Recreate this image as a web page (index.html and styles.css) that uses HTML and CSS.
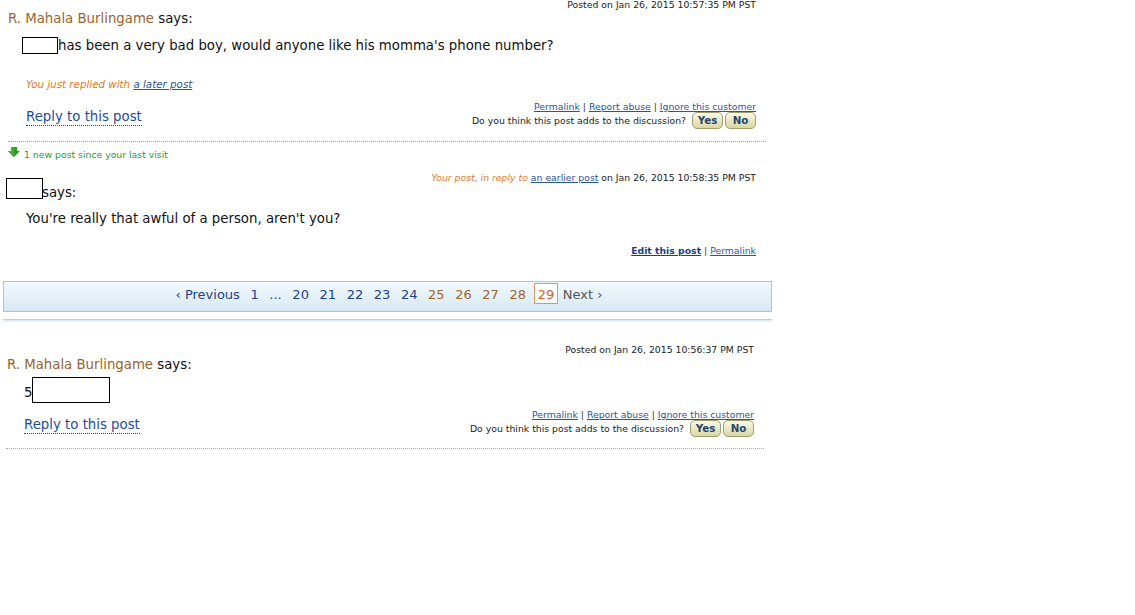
FILE: index.html
```html
<!DOCTYPE html>
<html>
<head>
<meta charset="utf-8">
<title>Discussion</title>
<link rel="stylesheet" href="styles.css">
</head>
<body>
<div class="thread">
  <div class="post post-first">
    <div class="meta">Posted on Jan 26, 2015 10:57:35 PM PST</div>
    <div class="author"><span class="name">R. Mahala Burlingame</span> says:</div>
    <div class="body body-first"><span class="redact redact-a"></span>has been a very bad boy, would anyone like his momma's phone number?</div>
    <div class="note">You just replied with <a href="#" class="small-link">a later post</a></div>
    <div class="post-foot post-foot-first">
      <a class="reply" href="#">Reply to this post</a>
      <div class="actions">
        <div class="links"><a href="#" class="small-link">Permalink</a> | <a href="#" class="small-link">Report abuse</a> | <a href="#" class="small-link">Ignore this customer</a></div>
        <div class="vote">Do you think this post adds to the discussion? <button class="vote-btn vote-yes">Yes</button><button class="vote-btn">No</button></div>
      </div>
    </div>
  </div>

  <div class="new-notice"><svg class="arrow" width="12" height="10" viewBox="0 0 12 10"><path d="M3 0H9V4H12L6 10L0 4H3Z" fill="#2f9a1f"/><path d="M3 0H6V10L0 4H3Z" fill="#3fae2c"/></svg>1 new post since your last visit</div>

  <div class="post post-second">
    <div class="meta meta-second"><span class="note-inline">Your post, in reply to</span> <a href="#" class="small-link">an earlier post</a> on Jan 26, 2015 10:58:35 PM PST</div>
    <div class="author author-second"><span class="redact redact-b"></span>says:</div>
    <div class="body body-second">You're really that awful of a person, aren't you?</div>
    <div class="edit-row"><a href="#" class="small-link edit-link">Edit this post</a> | <a href="#" class="small-link">Permalink</a></div>
  </div>

  <nav class="pager">
    <a href="#" class="page">‹ Previous</a>
    <a href="#" class="page">1</a>
    <span class="page dots">...</span>
    <a href="#" class="page">20</a>
    <a href="#" class="page">21</a>
    <a href="#" class="page">22</a>
    <a href="#" class="page">23</a>
    <a href="#" class="page">24</a>
    <a href="#" class="page visited">25</a>
    <a href="#" class="page visited">26</a>
    <a href="#" class="page visited">27</a>
    <a href="#" class="page visited">28</a>
    <span class="page current">29</span>
    <a href="#" class="page next">Next ›</a>
  </nav>
  <div class="pager-rule"></div>

  <div class="post post-third">
    <div class="meta meta-third">Posted on Jan 26, 2015 10:56:37 PM PST</div>
    <div class="author author-third"><span class="name">R. Mahala Burlingame</span> says:</div>
    <div class="body body-third">5<span class="redact redact-c"></span></div>
    <div class="post-foot post-foot-third">
      <a class="reply" href="#">Reply to this post</a>
      <div class="actions">
        <div class="links"><a href="#" class="small-link">Permalink</a> | <a href="#" class="small-link">Report abuse</a> | <a href="#" class="small-link">Ignore this customer</a></div>
        <div class="vote">Do you think this post adds to the discussion? <button class="vote-btn vote-yes">Yes</button><button class="vote-btn">No</button></div>
      </div>
    </div>
  </div>
</div>
</body>
</html>
```

FILE: styles.css
```css
body {
  margin: 0;
  font-family: Verdana, "DejaVu Sans", sans-serif;
  color: #000;
  background: #fff;
}

.thread {
  width: 775px;
}

.post {
  box-sizing: border-box;
  padding-right: 10px;
}

.post-first {
  margin-left: 8px;
  width: 758px;
  padding-bottom: 12px;
  border-bottom: 1px dotted #a8a8a8;
}

.meta {
  font-size: 9.3px;
  line-height: 12px;
  text-align: right;
  color: #222;
}

.post-first .meta {
  margin-top: -1px;
}

.author {
  font-size: 13.3px;
  line-height: 16px;
  color: #111;
}

.name {
  color: #98642f;
}

.body {
  font-size: 13.3px;
  line-height: 16px;
  color: #111;
}

.body-first {
  margin-top: 9px;
  padding-left: 14px;
  display: flex;
  align-items: center;
  height: 19px;
}

.redact {
  display: inline-block;
  box-sizing: border-box;
  border: 1px solid #000;
  background: #fff;
}

.redact-a {
  width: 36px;
  height: 17px;
}

.redact-b {
  width: 37px;
  height: 21px;
  vertical-align: -2px;
  margin-right: -1px;
}

.redact-c {
  width: 78px;
  height: 26px;
  vertical-align: -6px;
}

.note {
  margin-top: 23px;
  padding-left: 18px;
  font-size: 10.3px;
  line-height: 12px;
  font-style: italic;
  color: #e07a2e;
}

.note-inline {
  font-style: italic;
  color: #e07a2e;
}

.small-link {
  color: #2c5596;
  text-decoration: underline;
  font-style: normal;
}

.note .small-link {
  font-style: italic;
}

.post-foot {
  padding-left: 18px;
  display: flex;
  justify-content: space-between;
  align-items: flex-end;
}

.post-foot-first {
  margin-top: 11px;
}

.reply {
  margin-bottom: 3px;
  font-size: 13.3px;
  line-height: 16px;
  color: #1d4e94;
  text-decoration: none;
  border-bottom: 1px dotted #1d4e94;
}

.actions {
  font-size: 9.3px;
  color: #222;
  text-align: right;
}

.links {
  line-height: 11px;
  color: #333;
}

.vote {
  height: 17px;
  display: flex;
  justify-content: flex-end;
  align-items: center;
}

.vote-btn {
  box-sizing: border-box;
  width: 31px;
  height: 17px;
  margin: 0 0 0 2px;
  padding: 0;
  border: 1px solid #a09e6c;
  border-radius: 5px;
  background: linear-gradient(#fbfae8, #d9d6a4);
  font-family: Verdana, "DejaVu Sans", sans-serif;
  font-size: 10.3px;
  font-weight: bold;
  line-height: 15px;
  color: #27466e;
}

.vote-yes {
  margin-left: 6px;
}

.new-notice {
  margin-top: 7px;
  margin-left: 8px;
  font-size: 9.3px;
  line-height: 12px;
  color: #2f9a2f;
  display: flex;
  align-items: flex-start;
}

.arrow {
  margin-top: -2px;
  margin-right: 4px;
  flex: none;
}

.post-second {
  margin-left: 6px;
  width: 760px;
}

.meta-second {
  margin-top: 11px;
}

.author-second {
  margin-top: -6px;
}

.body-second {
  margin-top: 10px;
  padding-left: 20px;
}

.edit-row {
  margin-top: 18px;
  font-size: 9.3px;
  line-height: 12px;
  text-align: right;
  color: #333;
}

.edit-link {
  font-weight: bold;
  color: #1d3f7a;
}

.pager {
  margin-top: 24px;
  margin-left: 3px;
  width: 769px;
  height: 31px;
  box-sizing: border-box;
  padding-top: 1px;
  border: 1px solid #a7c7dc;
  background: linear-gradient(#f1f9fd, #d8e9f3);
  display: flex;
  justify-content: center;
  align-items: baseline;
  gap: 4.6px;
  font-size: 13px;
  line-height: 16px;
}

.page {
  padding: 0 3px;
  color: #1f3f8c;
  text-decoration: none;
}

.page.visited {
  color: #9c6530;
}

.page.current {
  padding: 3px 3px 0;
  border: 1px solid #e3956a;
  background: #fff;
  color: #c9631f;
}

.page.next {
  padding: 0;
  color: #555;
}

.pager-rule {
  margin-top: 7px;
  margin-left: 3px;
  width: 769px;
  height: 2px;
  border-top: 1px solid #c4ced5;
  background: #e3eef4;
}

.post-third {
  margin-left: 6px;
  width: 758px;
  padding-bottom: 11px;
  border-bottom: 1px dotted #a8a8a8;
}

.meta-third {
  margin-top: 22px;
}

.author-third {
  margin-top: 1px;
  padding-left: 1px;
}

.body-third {
  margin-top: 4px;
  padding-left: 18px;
}

.post-foot-third {
  margin-top: 6px;
}
```
